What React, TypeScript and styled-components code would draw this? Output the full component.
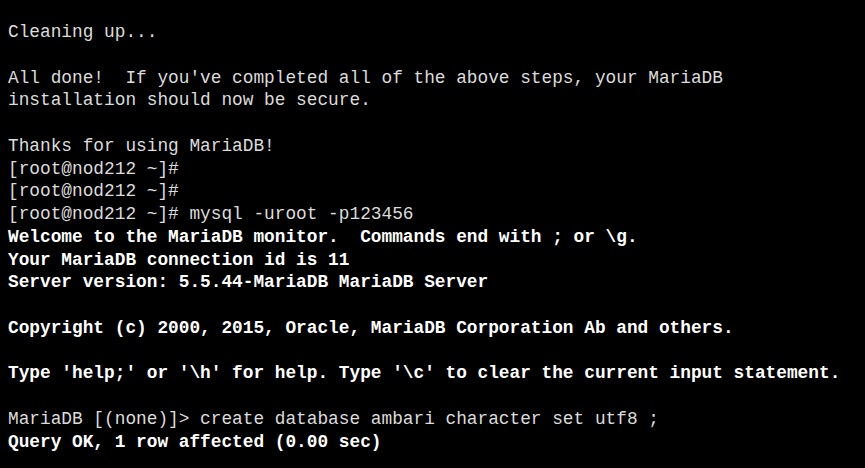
import React from "react";
import styled, { createGlobalStyle } from "styled-components";

const Global = createGlobalStyle`
  html, body { margin: 0; padding: 0; background: #000; }
  body { width: 865px; height: 468px; overflow: hidden; }
`;

const Terminal = styled.div`
  box-sizing: border-box;
  width: 865px;
  height: 468px;
  background: #000;
  padding: 21px 0 0 8px;
  font-family: "Liberation Mono", "DejaVu Sans Mono", monospace;
  font-size: 17.8px;
  line-height: 22.78px;
  overflow: hidden;
`;

const Line = styled.div<{ $bold?: boolean }>`
  height: 22.78px;
  white-space: pre;
  color: ${(p) => (p.$bold ? "#ffffff" : "#dcdcdc")};
  font-weight: ${(p) => (p.$bold ? 700 : 400)};
`;

type L = { t: string; b?: boolean };

const lines: L[] = [
  { t: "Cleaning up..." },
  { t: "" },
  { t: "All done!  If you've completed all of the above steps, your MariaDB" },
  { t: "installation should now be secure." },
  { t: "" },
  { t: "Thanks for using MariaDB!" },
  { t: "[root@nod212 ~]#" },
  { t: "[root@nod212 ~]#" },
  { t: "[root@nod212 ~]# mysql -uroot -p123456" },
  { t: "Welcome to the MariaDB monitor.  Commands end with ; or \\g.", b: true },
  { t: "Your MariaDB connection id is 11", b: true },
  { t: "Server version: 5.5.44-MariaDB MariaDB Server", b: true },
  { t: "" },
  { t: "Copyright (c) 2000, 2015, Oracle, MariaDB Corporation Ab and others.", b: true },
  { t: "" },
  { t: "Type 'help;' or '\\h' for help. Type '\\c' to clear the current input statement.", b: true },
  { t: "" },
  { t: "MariaDB [(none)]> create database ambari character set utf8 ;" },
  { t: "Query OK, 1 row affected (0.00 sec)", b: true },
];

export default function App() {
  return (
    <>
      <Global />
      <Terminal>
        {lines.map((l, i) => (
          <Line key={i} $bold={l.b}>
            {l.t || "\u00a0"}
          </Line>
        ))}
      </Terminal>
    </>
  );
}
